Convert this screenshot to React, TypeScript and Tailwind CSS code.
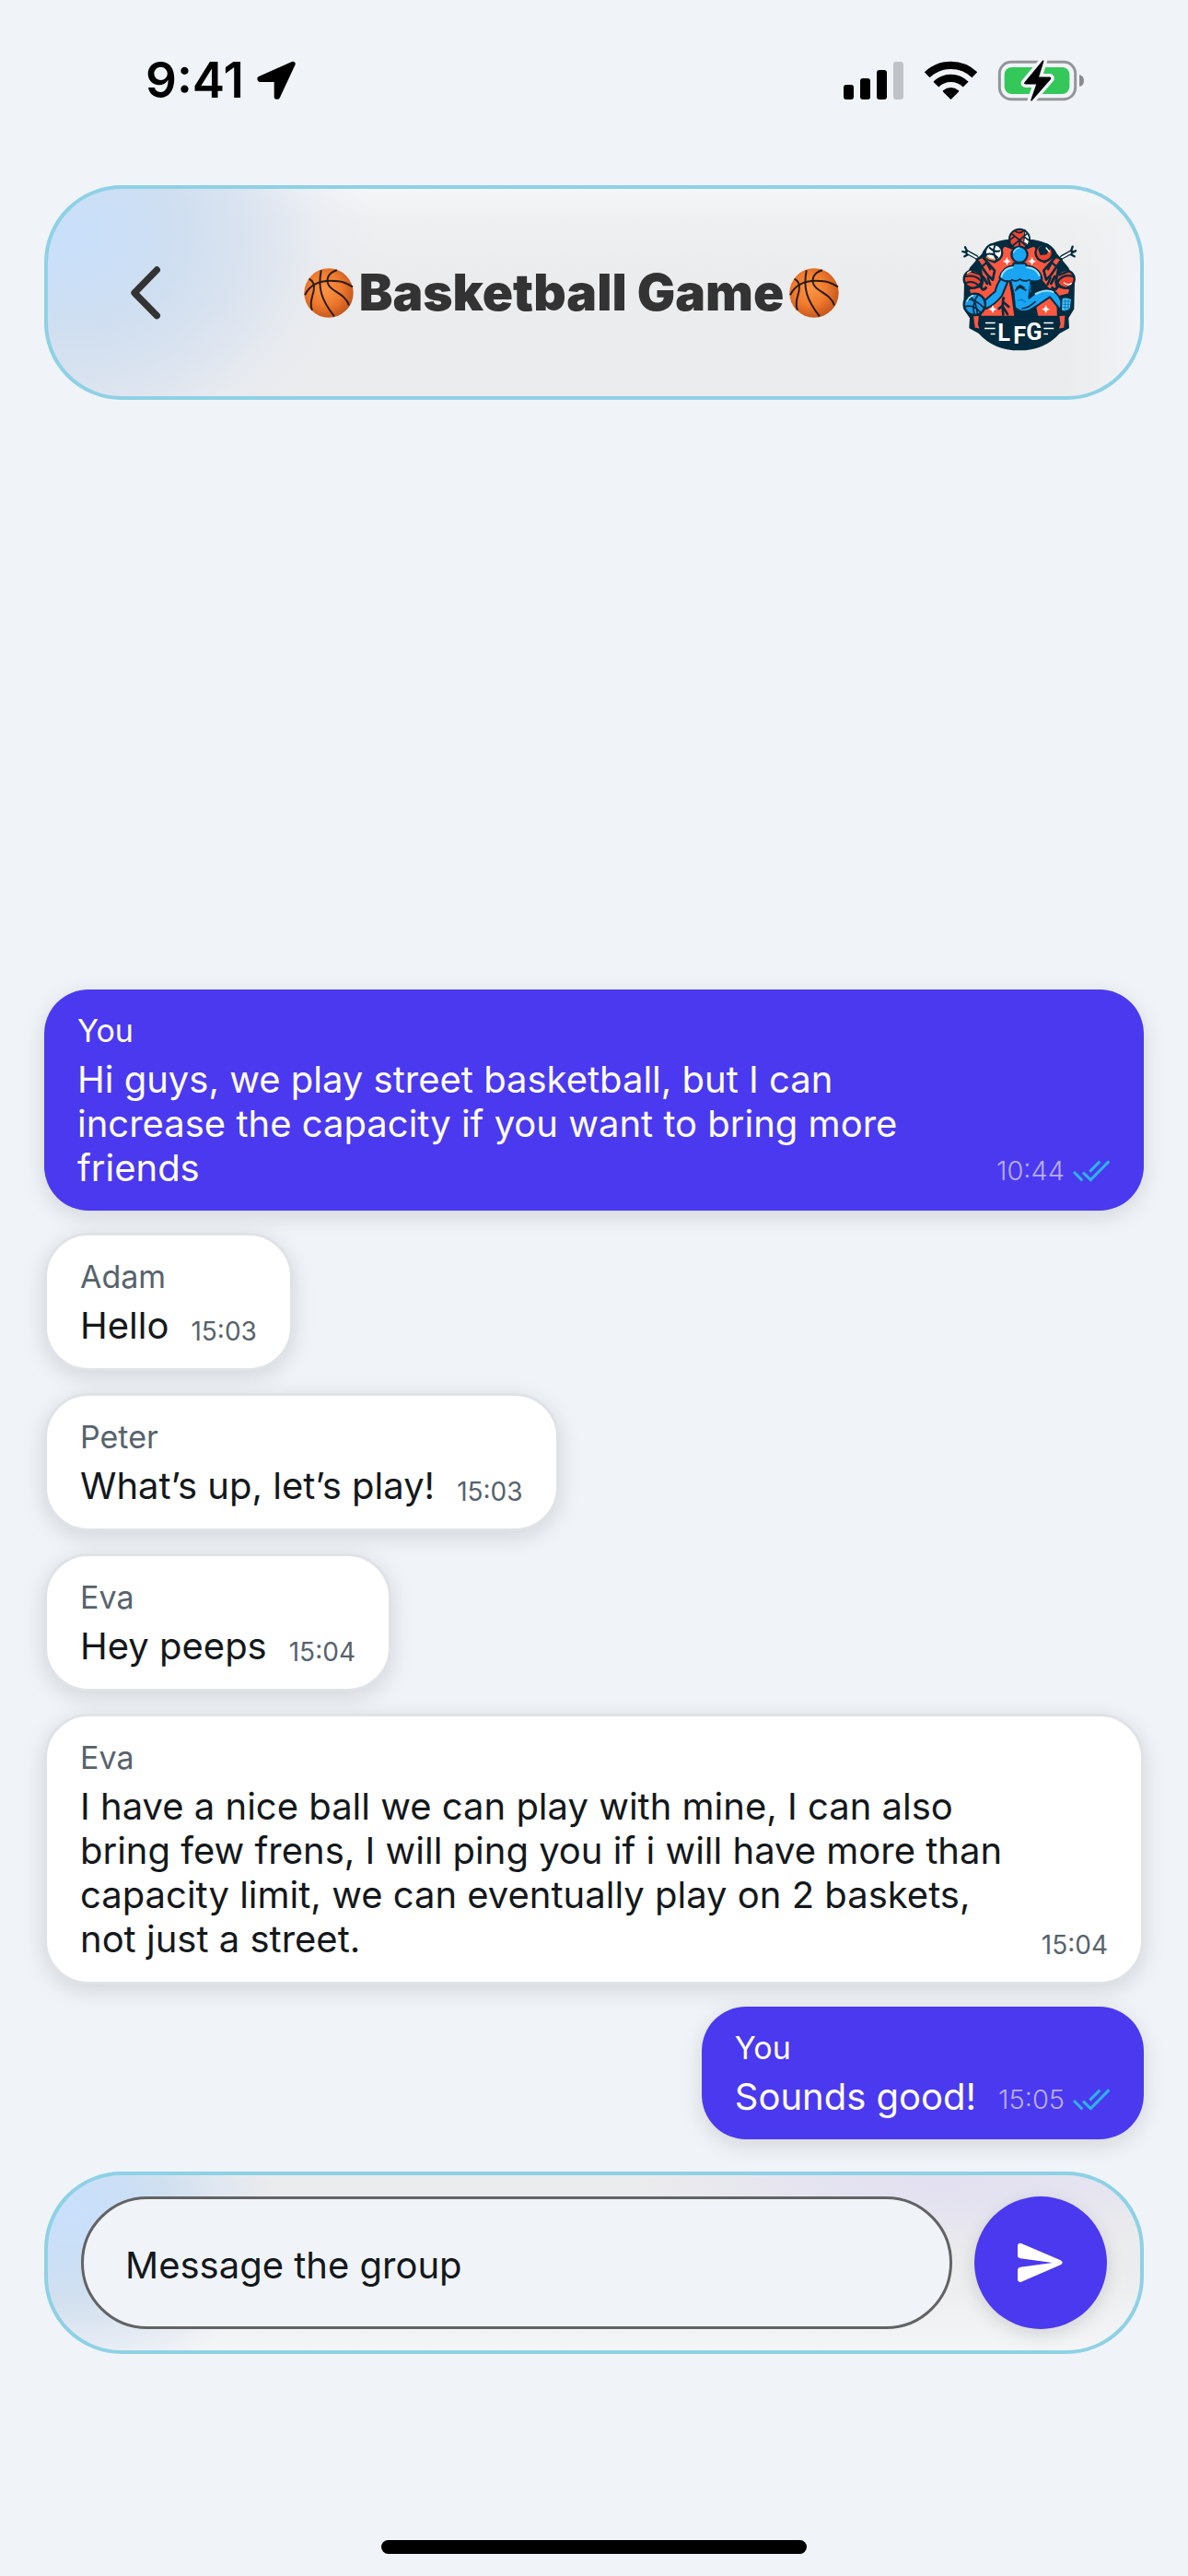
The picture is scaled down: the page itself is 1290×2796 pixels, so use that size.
type Message = {
  id: number;
  author: string;
  text: string;
  time: string;
  own?: boolean;
};

const messages: Message[] = [
  {
    id: 1,
    author: "You",
    text: "Hi guys, we play street basketball, but I can increase the capacity if you want to bring more friends",
    time: "10:44",
    own: true,
  },
  { id: 2, author: "Adam", text: "Hello", time: "15:03" },
  { id: 3, author: "Peter", text: "What’s up, let’s play!", time: "15:03" },
  { id: 4, author: "Eva", text: "Hey peeps", time: "15:04" },
  {
    id: 5,
    author: "Eva",
    text: "I have a nice ball we can play with mine, I can also bring few frens, I will ping you if i will have more than capacity limit, we can eventually play on 2 baskets, not just a street.",
    time: "15:04",
  },
  { id: 6, author: "You", text: "Sounds good!", time: "15:05", own: true },
];

function LocationIcon() {
  return (
    <svg viewBox="414 48 132 132" className="size-11" aria-hidden="true">
      <path
        d="M534 61 426 109 427 112H481V168H484Z"
        fill="#000"
        stroke="#000"
        strokeWidth="16"
        strokeLinejoin="round"
      />
    </svg>
  );
}

function SignalIcon() {
  return (
    <svg viewBox="48 45 198 129" className="h-[43px] w-[66px]" aria-hidden="true">
      <rect x="48" y="123" width="33" height="48" rx="9" />
      <rect x="102" y="102" width="33" height="69" rx="9" />
      <rect x="156" y="75" width="33" height="96" rx="9" />
      <rect x="210" y="48" width="33" height="123" rx="9" fill="#bfc3c7" />
    </svg>
  );
}

function WifiIcon() {
  return (
    <svg viewBox="309 42 177 132" className="h-11 w-[59px]" aria-hidden="true">
      <g fill="none" stroke="#000" strokeWidth="25">
        <path d="M320 91A112 112 0 0 1 475 91" />
        <path d="M349 122A68 68 0 0 1 446 122" />
      </g>
      <path d="M373 147Q369 143 373 141A39 39 0 0 1 422 141Q426 143 422 147L400 169Q397.500 172 395 169Z" />
    </svg>
  );
}

function BatteryIcon() {
  const bolt = "M698 46 639 117Q638 119 641 119H679L660 173 721 103Q722 100 719 100H681Z";
  return (
    <svg viewBox="549 39 285 141" className="h-[47px] w-[95px]" aria-hidden="true">
      <rect x="556" y="49" width="247" height="121" rx="38" fill="none" stroke="#949599" strokeWidth="9" />
      <path d="M816 90Q831 94 831 110T816 129Z" fill="#8a8b8f" />
      <rect x="572" y="66" width="212" height="87" rx="24" fill="#34c759" />
      <path d={bolt} fill="#f0f4f9" stroke="#f0f4f9" strokeWidth="26" strokeLinejoin="round" />
      <path d={bolt} fill="#000" stroke="#000" strokeWidth="5" strokeLinejoin="round" />
    </svg>
  );
}

function StatusBar() {
  return (
    <div className="flex h-[174px] shrink-0 items-center justify-between pr-28 pl-[158px]">
      <div className="flex items-center gap-[13px]">
        <span className="text-[53px] leading-none font-semibold text-black">9:41</span>
        <LocationIcon />
      </div>
      <div className="flex items-center gap-[21px]">
        <SignalIcon />
        <WifiIcon />
        <BatteryIcon />
      </div>
    </div>
  );
}

function Basketball() {
  return (
    <svg viewBox="867 299 164 164" className="size-[54px] shrink-0" role="img" aria-label="Basketball">
      <defs>
        <radialGradient id="ball" cx="0.42" cy="0.42" r="0.62">
          <stop offset="0" stopColor="#ff9544" />
          <stop offset="0.55" stopColor="#ee7a2e" />
          <stop offset="1" stopColor="#c4541a" />
        </radialGradient>
      </defs>
      <circle cx="949" cy="381" r="81" fill="url(#ball)" />
      <g fill="none" stroke="#2a1c12" strokeWidth="6">
        <path d="M870 388C885 358 915 341 955 341S1010 350 1028 361" />
        <path d="M924 306C912 365 925 405 967 458" />
        <path d="M884 334C899 341 903 355 899 375C893 400 886 415 894 438" />
        <path d="M976 306C945 315 940 337 948 354C958 376 1005 385 1016 422" />
      </g>
    </svg>
  );
}

function GroupLogo() {
  return (
    <svg viewBox="0 0 450 495" className="h-[165px] w-[150px]" role="img" aria-label="LFG group logo">
      <g stroke="#022b3f" strokeLinejoin="round" strokeLinecap="round">
        {/* badge silhouette */}
        <path
          d="M188 78C150 84 120 96 112 122L72 168 54 210 52 300 72 330 70 362 100 378C135 418 180 433 230 433S325 418 360 378L390 362 388 330 406 300 408 210 388 168 350 122C340 96 310 84 274 78Z"
          fill="#022b3f"
          strokeWidth="6"
        />
        {/* raised hands beside the shoulders */}
        <path d="M60 116 90 132M400 116 370 132" strokeWidth="14" />
        <path d="M62 116 54 100M60 118 46 114M66 122 52 130M398 116 404 98M400 118 414 112M396 122 410 130" strokeWidth="7" fill="none" />
        <path d="M64 118 92 134M396 118 368 134" stroke="#fff" strokeWidth="6" />
        {/* red field */}
        <path
          d="M184 96C168 98 172 140 150 150L118 132 104 160 112 214 108 228 66 236 70 252 108 262 104 326H356L354 262 392 252 396 236 352 228 348 214 358 160 342 132 312 150C292 140 294 98 276 96L256 104 206 104Z"
          fill="#ff5740"
          strokeWidth="5"
        />
        <path d="M92 140 110 130 150 176 144 206 126 190ZM368 140 350 130 310 176 318 206 334 190Z" fill="#ff5740" strokeWidth="8" />
        <path d="M112 160 124 150 136 172M348 160 336 150 324 172M128 200 136 222M332 200 322 222" fill="none" strokeWidth="7" />
        <path d="M122 232Q112 244 106 230M338 232Q346 244 354 230M112 196 126 218M346 196 334 218" fill="none" strokeWidth="9" />
        {/* red feet */}
        <path d="M78 320 102 322 98 350 104 368 84 364Z M382 320 358 322 362 350 356 368 378 364Z" fill="#ff5740" strokeWidth="5" />
        {/* top ball */}
        <circle cx="231" cy="74" r="33" fill="#f2452f" strokeWidth="6" />
        <path d="M250 48A33 33 0 0 1 258 92L246 84Z" fill="#fff" strokeWidth="3" />
        <path d="M206 56 254 96M256 56 208 96M216 46Q230 60 248 44M231 74V106M200 76 216 64M262 78 244 64" fill="none" strokeWidth="5" />
        {/* upper balls */}
        <circle cx="147" cy="118" r="28" fill="#fff" strokeWidth="7" />
        <path d="M134 102Q150 118 166 112M152 92Q140 118 158 142M122 124Q142 116 160 134" fill="none" strokeWidth="6" />
        <path d="M124 132Q136 142 150 140" fill="none" stroke="#e8843a" strokeWidth="5" />
        <circle cx="311" cy="118" r="28" fill="#f2452f" strokeWidth="7" />
        <path d="M294 106Q312 84 330 104L318 122 300 124Z" fill="#022b3f" strokeWidth="4" />
        <path d="M318 102 328 114" stroke="#fff" strokeWidth="4" />
        {/* side balls */}
        <circle cx="79" cy="204" r="29" fill="#f2452f" strokeWidth="7" />
        <path d="M52 196Q84 188 104 208M58 216Q78 208 98 224M70 178Q84 184 104 188" fill="none" strokeWidth="6" />
        <path d="M62 184Q66 180 72 178" fill="none" stroke="#ffd9c8" strokeWidth="4" />
        <circle cx="381" cy="204" r="29" fill="#f2452f" strokeWidth="7" />
        <path d="M408 196Q380 186 362 204T370 230M392 178Q376 184 360 190" fill="none" strokeWidth="7" />
        <path d="M376 216Q388 226 400 218" fill="none" stroke="#fff" strokeWidth="4" />
        {/* shadow behind the torso */}
        <path d="M196 196 206 250 216 326H290L284 296 330 240 300 204Z" fill="#022b3f" strokeWidth="4" />
        {/* outstretched arm and ball */}
        <path d="M172 200Q156 222 152 244L112 278 122 300Q150 288 174 258L192 214Z" fill="#1aa5f3" strokeWidth="6" />
        <circle cx="85" cy="286" r="35" fill="#1e9be6" strokeWidth="7" />
        <path d="M56 268Q88 268 116 298M98 252Q74 284 84 320M52 294Q80 284 104 312M70 258Q92 280 94 316" fill="none" strokeWidth="5" />
        <path d="M60 276Q66 262 80 257" fill="none" stroke="#c8eeff" strokeWidth="4" />
        {/* torso */}
        <path
          d="M212 152 210 160Q176 164 166 200Q184 214 202 210L212 252 216 296Q236 316 262 306L292 288 330 262 364 304 372 286Q356 244 330 236L290 244 262 266 268 210Q290 214 304 204Q298 166 254 160L250 152Z"
          fill="#1aa5f3"
          strokeWidth="6"
        />
        <path d="M172 196Q180 168 208 166M256 166Q286 168 296 192M284 252Q318 234 340 246" fill="none" stroke="#9fe0ff" strokeWidth="6" />
        <path d="M206 206Q222 214 232 204Q246 214 264 206M218 240 233 230 252 240M222 232 233 224 246 232M240 300Q260 298 282 278" fill="none" strokeWidth="5" />
        <path d="M226 274 236 270 250 278M266 222V246" fill="none" stroke="#0877bd" strokeWidth="4" />
        <circle cx="231" cy="124" r="26" fill="#1aa5f3" strokeWidth="7" />
        <path d="M212 116Q218 104 230 102" fill="none" stroke="#8bdcff" strokeWidth="5" />
        {/* shoe */}
        <path d="M368 266Q384 258 402 268L398 300Q384 316 366 306Z" fill="#4cc4f7" strokeWidth="6" />
        <path d="M374 276H396M374 286H394M372 296H392M380 270V306M390 270V304" fill="none" stroke="#0877bd" strokeWidth="3" />
        {/* small player */}
        <path d="M178 268 176 292 192 318M176 290 164 300M182 282 196 294M176 296 178 320" fill="none" strokeWidth="8" />
        <circle cx="179" cy="266" r="4" fill="#022b3f" />
        <path d="M100 326H360L352 378Q300 430 230 430T108 378Z" fill="#022b3f" strokeWidth="2" />
      </g>
      <g fill="#fff">
        <path d="M190 132 194 142 203 146 194 150 190 160 186 150 177 146 186 142ZM272 132 276 142 285 146 276 150 272 160 268 150 259 146 268 142ZM144 288 148 298 157 302 148 306 144 316 140 306 131 302 140 298ZM317 288 321 298 330 302 321 306 317 316 313 306 304 302 313 298Z" />
        <path d="M120 344H152V349H120ZM117 362H152V367H117ZM137 380H152V385H137ZM310 344H341V349H310ZM310 362H343V367H310ZM310 380H324V385H310Z" />
      </g>
      <g fill="#fff" fontFamily="Roboto, sans-serif" fontWeight="700" fontSize="76">
        <text x="160" y="404">L</text>
        <text x="211" y="413">F</text>
        <text x="253" y="402">G</text>
      </g>
    </svg>
  );
}

function Header() {
  return (
    <header className="mx-12 mt-[27px] flex h-[233px] shrink-0 items-center rounded-[84px] border-4 border-[#8ed1e6] bg-[#ebeced] bg-[radial-gradient(ellipse_330px_275px_at_25px_50px,#c9e0fb_0%,#cbdff6_18%,#d0dff0_38%,rgba(216,226,240,0.85)_60%,rgba(228,233,242,0.5)_80%,rgba(235,236,237,0)_100%),linear-gradient(to_bottom,#f5f6f8_0px,rgba(240,241,243,0.7)_35px,rgba(235,236,237,0)_90px),linear-gradient(to_left,#f2f3f6_0px,rgba(235,236,237,0)_80px)] bg-no-repeat pr-[58px] pl-[43px]">
      <button type="button" aria-label="Back" className="flex size-[126px] items-center justify-center">
        <svg viewBox="306 294 102 180" className="h-[60px] w-[34px]" aria-hidden="true">
          <path d="M394 309 321 383.500 394 458" fill="none" stroke="#333" strokeWidth="22" strokeLinecap="round" strokeLinejoin="round" />
        </svg>
      </button>
      <h1 className="flex flex-1 items-center justify-center gap-1.5 text-[55px] leading-none font-black whitespace-nowrap text-[#333]">
        <Basketball />
        Basketball Game
        <Basketball />
      </h1>
      <div className="pl-2.5">
        <GroupLogo />
      </div>
    </header>
  );
}

function ReadTicks() {
  return (
    <svg viewBox="1242 289 126 126" className="size-[42px] shrink-0" role="img" aria-label="Read">
      <g fill="none" stroke="#2bb5ea" strokeWidth="9">
        <path d="M1248 355 1276 383" />
        <path d="M1278 357 1303 381 1363 320" />
        <path d="M1300 354 1333 321" />
      </g>
    </svg>
  );
}

function Bubble({ message }: { message: Message }) {
  const { author, text, time, own } = message;
  return (
    <li
      className={
        own
          ? "max-w-full self-end rounded-[48px] bg-[#4b39ef] px-9 pt-6 pb-[22px] text-white shadow-[0_6px_24px_rgba(0,0,0,0.13)]"
          : "max-w-full self-start rounded-[48px] border-3 border-[#dfe3e7] bg-white px-9 pt-6 pb-[22px] text-[#14181b] shadow-[0_6px_24px_rgba(0,0,0,0.13)]"
      }
    >
      <p className={own ? "mb-2 text-[34px] leading-[42px]" : "mb-2 text-[34px] leading-[42px] text-[#57636c]"}>
        {author}
      </p>
      <div className="flex items-end gap-6">
        <p className="flex-1 text-[40px] leading-[48px]">{text}</p>
        {own ? (
          <div className="flex items-center gap-2">
            <time className="text-[29px] leading-[42px] font-light text-white/60">{time}</time>
            <ReadTicks />
          </div>
        ) : (
          <time className="text-[28px] leading-9 text-[#57636c]">{time}</time>
        )}
      </div>
    </li>
  );
}

function Composer() {
  return (
    <form
      onSubmit={(event) => event.preventDefault()}
      className="mx-12 mt-[35px] mb-[202px] flex shrink-0 items-center gap-6 rounded-[84px] border-4 border-[#8ed1e6] bg-[#ebeced] bg-[radial-gradient(ellipse_230px_190px_at_25px_40px,#c9e0fc_0%,#cbdff5_30%,#d2e0ef_50%,rgba(221,230,242,0.8)_70%,rgba(235,236,237,0)_100%),radial-gradient(ellipse_340px_90px_at_82%_0%,#e2e0f1_0%,#e4e3f0_40%,rgba(235,236,237,0)_100%),linear-gradient(to_top,#f4f5f7_0px,rgba(235,236,237,0)_90px)] px-9 py-[23px]"
    >
      <input
        type="text"
        aria-label="Message the group"
        placeholder="Message the group"
        className="h-36 min-w-0 flex-1 rounded-full border-3 border-[#626364] bg-[#f0f4f9] px-[45px] pt-1 text-[40px] text-[#14181b] outline-none placeholder:text-[#14181b] placeholder:opacity-100"
      />
      <button
        type="submit"
        aria-label="Send"
        className="flex size-36 shrink-0 items-center justify-center rounded-full bg-[#4b39ef] shadow-[0_6px_20px_rgba(0,0,0,0.13)]"
      >
        <svg viewBox="1057 804 168 168" className="size-14" aria-hidden="true">
          <path
            d="M1066 832Q1067 821 1078 825L1206 880Q1218 887 1206 895L1078 950Q1067 954 1066 943V912Q1066 904 1075 902L1180 888 1075 874Q1066 872 1066 864Z"
            fill="#fff"
          />
        </svg>
      </button>
    </form>
  );
}

export default function App() {
  return (
    <div className="flex min-h-screen flex-col bg-[#f0f4f9] pb-6 font-['Inter',sans-serif]">
      <StatusBar />
      <Header />
      <main className="flex flex-1 flex-col justify-end px-12 pt-6">
        <ul className="flex flex-col gap-6">
          {messages.map((message) => (
            <Bubble key={message.id} message={message} />
          ))}
        </ul>
      </main>
      <Composer />
      <div className="h-[15px] w-[462px] shrink-0 self-center rounded-full bg-black" />
    </div>
  );
}
